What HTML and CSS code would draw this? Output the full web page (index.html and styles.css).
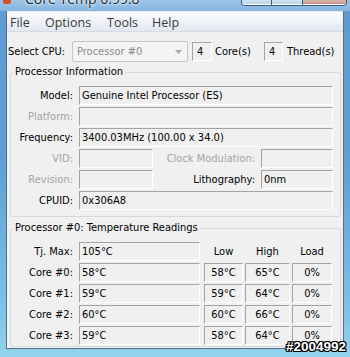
FILE: index.html
```html
<!DOCTYPE html>
<html>
<head>
<meta charset="utf-8">
<title>Core Temp</title>
<link rel="stylesheet" href="styles.css">
</head>
<body>
<div class="window">
  <div class="titlebar">
    <span class="app-icon"></span>
    <span class="title">Core Temp 0.99.8</span>
    <div class="caption">
      <span class="cap-btn cap-min"></span><span class="cap-btn cap-max"></span><span class="cap-btn cap-close"></span>
    </div>
  </div>
  <div class="client">
    <div class="menubar">
      <span class="menu-item mi-file">File</span>
      <span class="menu-item mi-options">Options</span>
      <span class="menu-item mi-tools">Tools</span>
      <span class="menu-item">Help</span>
    </div>
    <div class="content">
      <div class="cpu-row">
        <span class="cpu-label">Select CPU:</span>
        <div class="combo">
          <span>Processor #0</span>
          <svg class="combo-arrow" width="7" height="4" viewBox="0 0 7 4"><path d="M0 0h7L3.5 4z" fill="#a9a9a9"/></svg>
        </div>
        <span class="field count">4</span>
        <span class="count-label cores">Core(s)</span>
        <span class="field count threads">4</span>
        <span class="count-label">Thread(s)</span>
      </div>

      <fieldset class="group">
        <legend>Processor Information</legend>
        <div class="info-grid">
          <span class="lbl">Model:</span><span class="field span3">Genuine Intel Processor (ES)</span>
          <span class="lbl dis">Platform:</span><span class="field span3"></span>
          <span class="lbl">Frequency:</span><span class="field span3">3400.03MHz (100.00 x 34.0)</span>
          <span class="lbl dis">VID:</span><span class="field"></span><span class="lbl dis">Clock Modulation:</span><span class="field"></span>
          <span class="lbl dis">Revision:</span><span class="field"></span><span class="lbl">Lithography:</span><span class="field">0nm</span>
          <span class="lbl">CPUID:</span><span class="field span3">0x306A8</span>
        </div>
      </fieldset>

      <fieldset class="group temps">
        <legend>Processor #0: Temperature Readings</legend>
        <div class="temp-grid">
          <span class="lbl">Tj. Max:</span><span class="field">105°C</span><span class="hdr low">Low</span><span class="hdr">High</span><span class="hdr">Load</span>
          <span class="lbl">Core #0:</span><span class="field">58°C</span><span class="field num low">58°C</span><span class="field num">65°C</span><span class="field num">0%</span>
          <span class="lbl">Core #1:</span><span class="field">59°C</span><span class="field num low">59°C</span><span class="field num">64°C</span><span class="field num">0%</span>
          <span class="lbl">Core #2:</span><span class="field">60°C</span><span class="field num low">60°C</span><span class="field num">66°C</span><span class="field num">0%</span>
          <span class="lbl">Core #3:</span><span class="field">59°C</span><span class="field num low">58°C</span><span class="field num">64°C</span><span class="field num">0%</span>
        </div>
      </fieldset>
    </div>
  </div>
  <div class="watermark">#2004992</div>
</div>
</body>
</html>
```

FILE: styles.css
```css
* { box-sizing: border-box; }

html, body {
  margin: 0;
  padding: 0;
}

body {
  width: 350px;
  height: 357px;
  overflow: hidden;
  font-family: "DejaVu Sans Condensed", "DejaVu Sans", sans-serif;
  font-stretch: condensed;
  font-size: 11px;
  color: #000;
  background: #6aa7d8;
}

.window {
  position: relative;
  width: 350px;
  height: 357px;
  display: flex;
  flex-direction: column;
  background: linear-gradient(180deg, #5d9bd0 0%, #5f9fd3 45%, #7cc0e6 85%, #93d3ee 100%);
}

/* ---------- title bar (cropped) ---------- */
.titlebar {
  height: 11px;
  display: flex;
  align-items: flex-start;
  overflow: hidden;
  background: linear-gradient(180deg, #9cc4e6, #86b6df);
}

.app-icon {
  width: 8px;
  height: 4px;
  margin-left: 3px;
  background: #d4512c;
  border-radius: 0 0 2px 2px;
}

.title {
  margin-left: 14px;
  margin-top: -8px;
  font-family: "Open Sans", sans-serif;
  font-stretch: normal;
  font-size: 14px;
  line-height: 14px;
  color: #1b2a3a;
  text-shadow: 0 0 4px #fff, 0 0 2px #fff;
}

.caption {
  margin-left: auto;
  margin-right: 3px;
  display: flex;
  height: 6px;
  border: 1px solid #3f5f80;
  border-top: none;
  border-radius: 0 0 4px 4px;
  overflow: hidden;
}

.cap-btn {
  display: block;
  height: 100%;
  background: linear-gradient(180deg, #cfe3f3, #b3d0ea);
  box-shadow: inset 0 -1px 0 #fff;
}

.cap-min { width: 30px; border-right: 1px solid #3f5f80; }
.cap-max { width: 31px; border-right: 1px solid #3f5f80; }
.cap-close { width: 43px; background: linear-gradient(180deg, #d9b5ad, #c98f84); }

/* ---------- client ---------- */
.client {
  flex: 1;
  margin: 0 6px 8px;
  border: 1px solid #5a6e84;
  border-top: none;
  background: #f0f0f0;
  display: flex;
  flex-direction: column;
}

.menubar {
  height: 21px;
  display: flex;
  align-items: center;
  padding-left: 3px;
  padding-top: 1px;
  font-family: "Open Sans", sans-serif;
  font-stretch: normal;
  font-size: 12.5px;
  color: #3a3a3a;
  background: linear-gradient(180deg, #fbfcfe 0%, #eef1f7 55%, #e1e6f0 100%);
  border-bottom: 1px solid #d6dbe5;
  border-top: 1px solid #e8edf5;
}

.menu-item { display: block; white-space: nowrap; }
.mi-file { width: 35px; }
.mi-options { width: 62px; }
.mi-tools { width: 45px; }

.content {
  flex: 1;
  padding-top: 9px;
  display: flex;
  flex-direction: column;
}

/* ---------- cpu selector row ---------- */
.cpu-row {
  display: flex;
  align-items: center;
  height: 21px;
  padding-left: 1px;
}

.cpu-label { width: 63px; white-space: nowrap; }

.combo {
  width: 116px;
  height: 21px;
  margin-left: 1px;
  padding: 0 5px 0 4px;
  display: flex;
  align-items: center;
  justify-content: space-between;
  border: 1px solid #c6c6c6;
  border-radius: 2px;
  background: #f4f4f4;
  color: #8b8b8b;
}

.combo-arrow { display: block; }

.field {
  display: block;
  height: 19px;
  line-height: 17px;
  padding-left: 2px;
  border: 1px solid;
  border-color: #a3a3a3 #ffffff #ffffff #a3a3a3;
  white-space: nowrap;
  overflow: hidden;
}

.count {
  width: 20px;
  margin-left: 4px;
  padding-left: 4px;
}

.count.threads { width: 19px; margin-left: 3px; }

.count-label { white-space: nowrap; margin-left: 4px; }
.count-label.cores { width: 46px; margin-left: 3px; }

/* ---------- group boxes ---------- */
.group {
  margin: 3px 2px 0 3px;
  padding: 7px 7px 6px 0;
  border: 1px solid #d2dbe2;
  border-radius: 3px;
  min-width: 0;
}

.group legend {
  padding: 0 2px;
  margin-left: 2px;
  line-height: 14px;
}

.group.temps {
  margin-top: 4px;
  padding-bottom: 1px;
}

.lbl {
  display: block;
  text-align: right;
  line-height: 19px;
  white-space: nowrap;
  padding-right: 2px;
}

.dis { color: #a4a4a4; }

.info-grid {
  display: grid;
  grid-template-columns: 64px 74px 1fr 72px;
  grid-auto-rows: 19px;
  column-gap: 4px;
  row-gap: 2px;
}

.span3 { grid-column: span 3; }

.temp-grid {
  display: grid;
  grid-template-columns: 66px 121px 41px 45px 40px;
  grid-auto-rows: 19px;
  column-gap: 2px;
  row-gap: 2px;
}

.temp-grid .lbl { padding-right: 4px; }

.low { margin-left: 2px; }

.num { text-align: center; padding-left: 0; }

.hdr {
  display: block;
  text-align: center;
  line-height: 19px;
}

/* ---------- watermark ---------- */
.watermark {
  position: absolute;
  right: 4px;
  bottom: 3px;
  font-family: "Liberation Sans", sans-serif;
  font-stretch: normal;
  font-weight: bold;
  font-size: 13.5px;
  line-height: 14px;
  color: #fff;
  text-shadow: 1px 0 0 #000, -1px 0 0 #000, 0 1px 0 #000, 0 -1px 0 #000,
               1px 1px 0 #000, -1px -1px 0 #000, 1px -1px 0 #000, -1px 1px 0 #000;
}
```
